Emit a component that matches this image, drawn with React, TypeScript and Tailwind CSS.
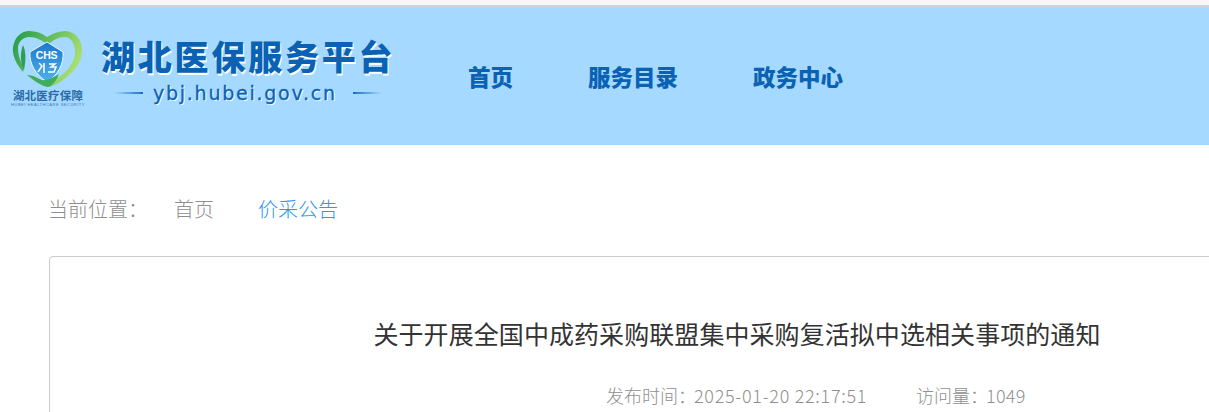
import React from 'react';

const navItems = ['首页', '服务目录', '政务中心'];

function Logo() {
  return (
    <div className="w-[72px] flex flex-col items-center shrink-0">
      <svg width="72" height="60" viewBox="0 0 72 60">
        <defs>
          <linearGradient id="heart" x1="0" y1="0" x2="1" y2="0.4">
            <stop offset="0" stopColor="#1f9a4a" />
            <stop offset="1" stopColor="#a8de70" />
          </linearGradient>
          <linearGradient id="shield" x1="0" y1="0" x2="0" y2="1">
            <stop offset="0" stopColor="#1c78cc" />
            <stop offset="1" stopColor="#4fb0ee" />
          </linearGradient>
        </defs>
        <path
          d="M11 42 C4 34 0 25 1 17 C3 6 10 1 17 1 C24 1 30 3 35 7 C41 3 48 1 54 1 C64 2 70 10 70 20 C70 30 65 38 58 44 C52 50 46 54 38 57 L36 54 C44 50 52 44 57 38 C61 32 64 26 63 20 C62 12 58 7 53 7 C46 7 41 10 36 15 C30 10 24 7 17 7 C11 7 6 12 6 18 C6 25 8 31 12 38 Z"
          fill="url(#heart)"
        />
        <path d="M11 15 C14 21 14 30 12 40 C8 33 8 23 11 15 Z" fill="#2f9e55" />
        <path d="M18 22 L35 12 L51 22 C52 34 46 45 35 52 C24 45 17 34 18 22 Z" fill="url(#shield)" stroke="#e6f5ff" strokeWidth="1" />
        <text x="34.5" y="29" textAnchor="middle" fontSize="10.5" fontWeight="700" fill="#ffffff" fontFamily="'Liberation Sans', sans-serif" letterSpacing="-0.3">
          CHS
        </text>
        <path d="M27 33 l3 3 l-4 6 M32 33 v10 M37 34 h6 l-4 3 h5 l-2 5 h-6" stroke="#ffffff" strokeWidth="1.5" fill="none" />
        <path d="M15 45 C21 45 25 48 30 50 C34 51 40 48 47 44 C45 50 40 56 36 57 C29 56 21 50 15 45 Z" fill="#3fae5c" />
      </svg>
      <span className="mt-[-1px] text-[11.5px] leading-[13px] font-bold text-[#2a6aa8] tracking-[0.2px] whitespace-nowrap [font-family:'Noto_Sans_CJK_SC',sans-serif]">
        湖北医疗保障
      </span>
      <span className="text-[4px] leading-[5px] text-[#3a78b0] whitespace-nowrap tracking-[0.5px] [font-family:'Liberation_Sans',sans-serif]">
        HUBEI HEALTHCARE SECURITY
      </span>
    </div>
  );
}

function Header() {
  return (
    <div className="h-[145px] border-t-[7px] border-[#f7f7f8] bg-[#a6d9ff] flex items-start pl-3 relative">
      <span className="absolute left-0 right-0 top-[-2px] h-[2px] bg-[#d3d3d8]" />
      <div className="mt-[23px]">
        <Logo />
      </div>
      <div className="ml-[17px] mt-[27px] w-[292px] shrink-0">
        <div className="text-[34px] leading-[44px] font-black tracking-[2.8px] text-[#0a62b4] whitespace-nowrap [text-shadow:1px_2px_0_#ffffff] [font-family:'Noto_Sans_CJK_SC',sans-serif]">
          湖北医保服务平台
        </div>
        <div className="mt-[3px] flex items-center gap-[10px] pl-[13px]">
          <span className="w-[29px] h-[2px] bg-gradient-to-r from-transparent to-[#1a6fbc]" />
          <span className="text-[19px] leading-6 tracking-[1.75px] text-[#0a62b4] [-webkit-text-stroke:0.3px_#0a62b4] [text-shadow:1px_1px_0_#ffffff] [font-family:'DejaVu_Sans',sans-serif]">
            ybj.hubei.gov.cn
          </span>
          <span className="ml-[6px] w-[29px] h-[2px] bg-gradient-to-r from-[#1a6fbc] to-transparent" />
        </div>
      </div>
      <nav className="ml-[75px] mt-[53px] flex gap-[75px]">
        {navItems.map(item => (
          <a key={item} className="text-[22.5px] leading-8 font-black text-[#0a62b4] whitespace-nowrap">
            {item}
          </a>
        ))}
      </nav>
    </div>
  );
}

export default function App() {
  return (
    <div className="w-[1209px] h-[412px] overflow-hidden bg-white [font-family:'Noto_Sans_CJK_SC',sans-serif]">
      <Header />

      {/* Breadcrumb */}
      <div className="pl-[48px] mt-[49px] flex items-center text-[20px] leading-[30px] font-light text-[#8f8f8f] whitespace-nowrap">
        <span className="w-[126px]">当前位置：</span>
        <span className="w-[84px]">首页</span>
        <span className="text-[#2f96f3]">价采公告</span>
      </div>

      {/* Article */}
      <div className="ml-[49px] mt-[32px] w-[1376px] h-[300px] border border-[#cccccc] rounded-[4px]">
        <h1 className="mt-[58px] text-center text-[25px] leading-[36px] font-normal tracking-[0.07px] text-[#333333] whitespace-nowrap">
          关于开展全国中成药采购联盟集中采购复活拟中选相关事项的通知
        </h1>
        <div className="mt-[30px] pl-[556px] flex text-[18px] leading-[28px] font-light text-[#8f8f8f] whitespace-nowrap">
          <span className="w-[310px]">
            发布时间：<span className="ml-[-2px] tracking-[0.7px]">2025-01-20 22:17:51</span>
          </span>
          <span>
            访问量：<span className="ml-[-2px] tracking-[0.3px]">1049</span>
          </span>
        </div>
      </div>
    </div>
  );
}
